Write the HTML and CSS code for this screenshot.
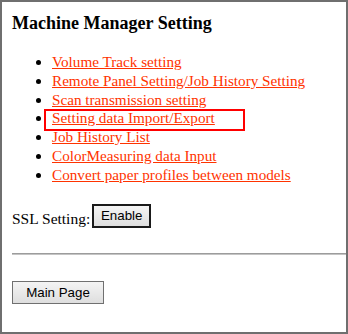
FILE: index.html
```html
<!DOCTYPE html>
<html>
<head>
<meta charset="utf-8">
<title>Machine Manager Setting</title>
<link rel="stylesheet" href="styles.css">
</head>
<body>
<div class="frame">
  <h3 class="title">Machine Manager Setting</h3>
  <ul class="menu">
    <li><a href="#">Volume Track setting</a></li>
    <li><a href="#">Remote Panel Setting/Job History Setting</a></li>
    <li><a href="#">Scan transmission setting</a></li>
    <li class="marked"><a href="#">Setting data Import/Export</a><span class="highlight"></span></li>
    <li><a href="#">Job History List</a></li>
    <li><a href="#">ColorMeasuring data Input</a></li>
    <li><a href="#">Convert paper profiles between models</a></li>
  </ul>
  <div class="ssl-row">
    <span class="ssl-label">SSL Setting:</span>
    <button class="btn btn-enable" type="button">Enable</button>
  </div>
  <hr class="divider">
  <button class="btn btn-main" type="button">Main Page</button>
</div>
</body>
</html>
```

FILE: styles.css
```css
html, body {
  margin: 0;
  padding: 0;
  background: #ffffff;
}

.frame {
  box-sizing: border-box;
  width: 348px;
  height: 334px;
  border: 2px solid #6f6f6f;
  padding: 10px 0 0 10px;
  font-family: "Liberation Serif", "Times New Roman", serif;
  font-size: 15.2px;
  color: #000;
  overflow: hidden;
}

.title {
  margin: 0;
  font-size: 18px;
  line-height: 22px;
  font-weight: bold;
}

.menu {
  margin: 19px 0 0 0;
  padding: 0 0 0 40px;
  list-style: disc;
}

.menu li {
  line-height: 18.8px;
}

.menu a {
  color: #ff3300;
  text-decoration: underline;
}

.marked {
  position: relative;
}

.highlight {
  position: absolute;
  left: -8px;
  top: 0;
  width: 201px;
  height: 22px;
  box-sizing: border-box;
  border: 2px solid #ff0000;
  pointer-events: none;
}

.ssl-row {
  display: flex;
  align-items: flex-end;
  gap: 2px;
  margin-top: 19px;
}

.ssl-label {
  font-size: 15.5px;
  line-height: 19px;
}

.btn {
  font-family: "Liberation Sans", Arial, sans-serif;
  font-size: 13.33px;
  line-height: 15px;
  color: #000;
  background: linear-gradient(#f4f4f4, #dedede);
  box-sizing: border-box;
  margin: 0;
}

.btn-enable {
  width: 59px;
  height: 24px;
  border: 2px solid #1a1a1a;
  padding: 2px 0 3px 0;
  text-align: center;
}

.divider {
  margin: 25px 0 0 0;
  height: 0;
  border: 0;
  border-top: 1px solid #9c9c9c;
  border-bottom: 1px solid #c4c4c4;
}

.btn-main {
  display: block;
  width: 92px;
  height: 23px;
  margin-top: 26px;
  border: 1px solid #707070;
  padding: 3px 0;
  text-align: center;
}
```
